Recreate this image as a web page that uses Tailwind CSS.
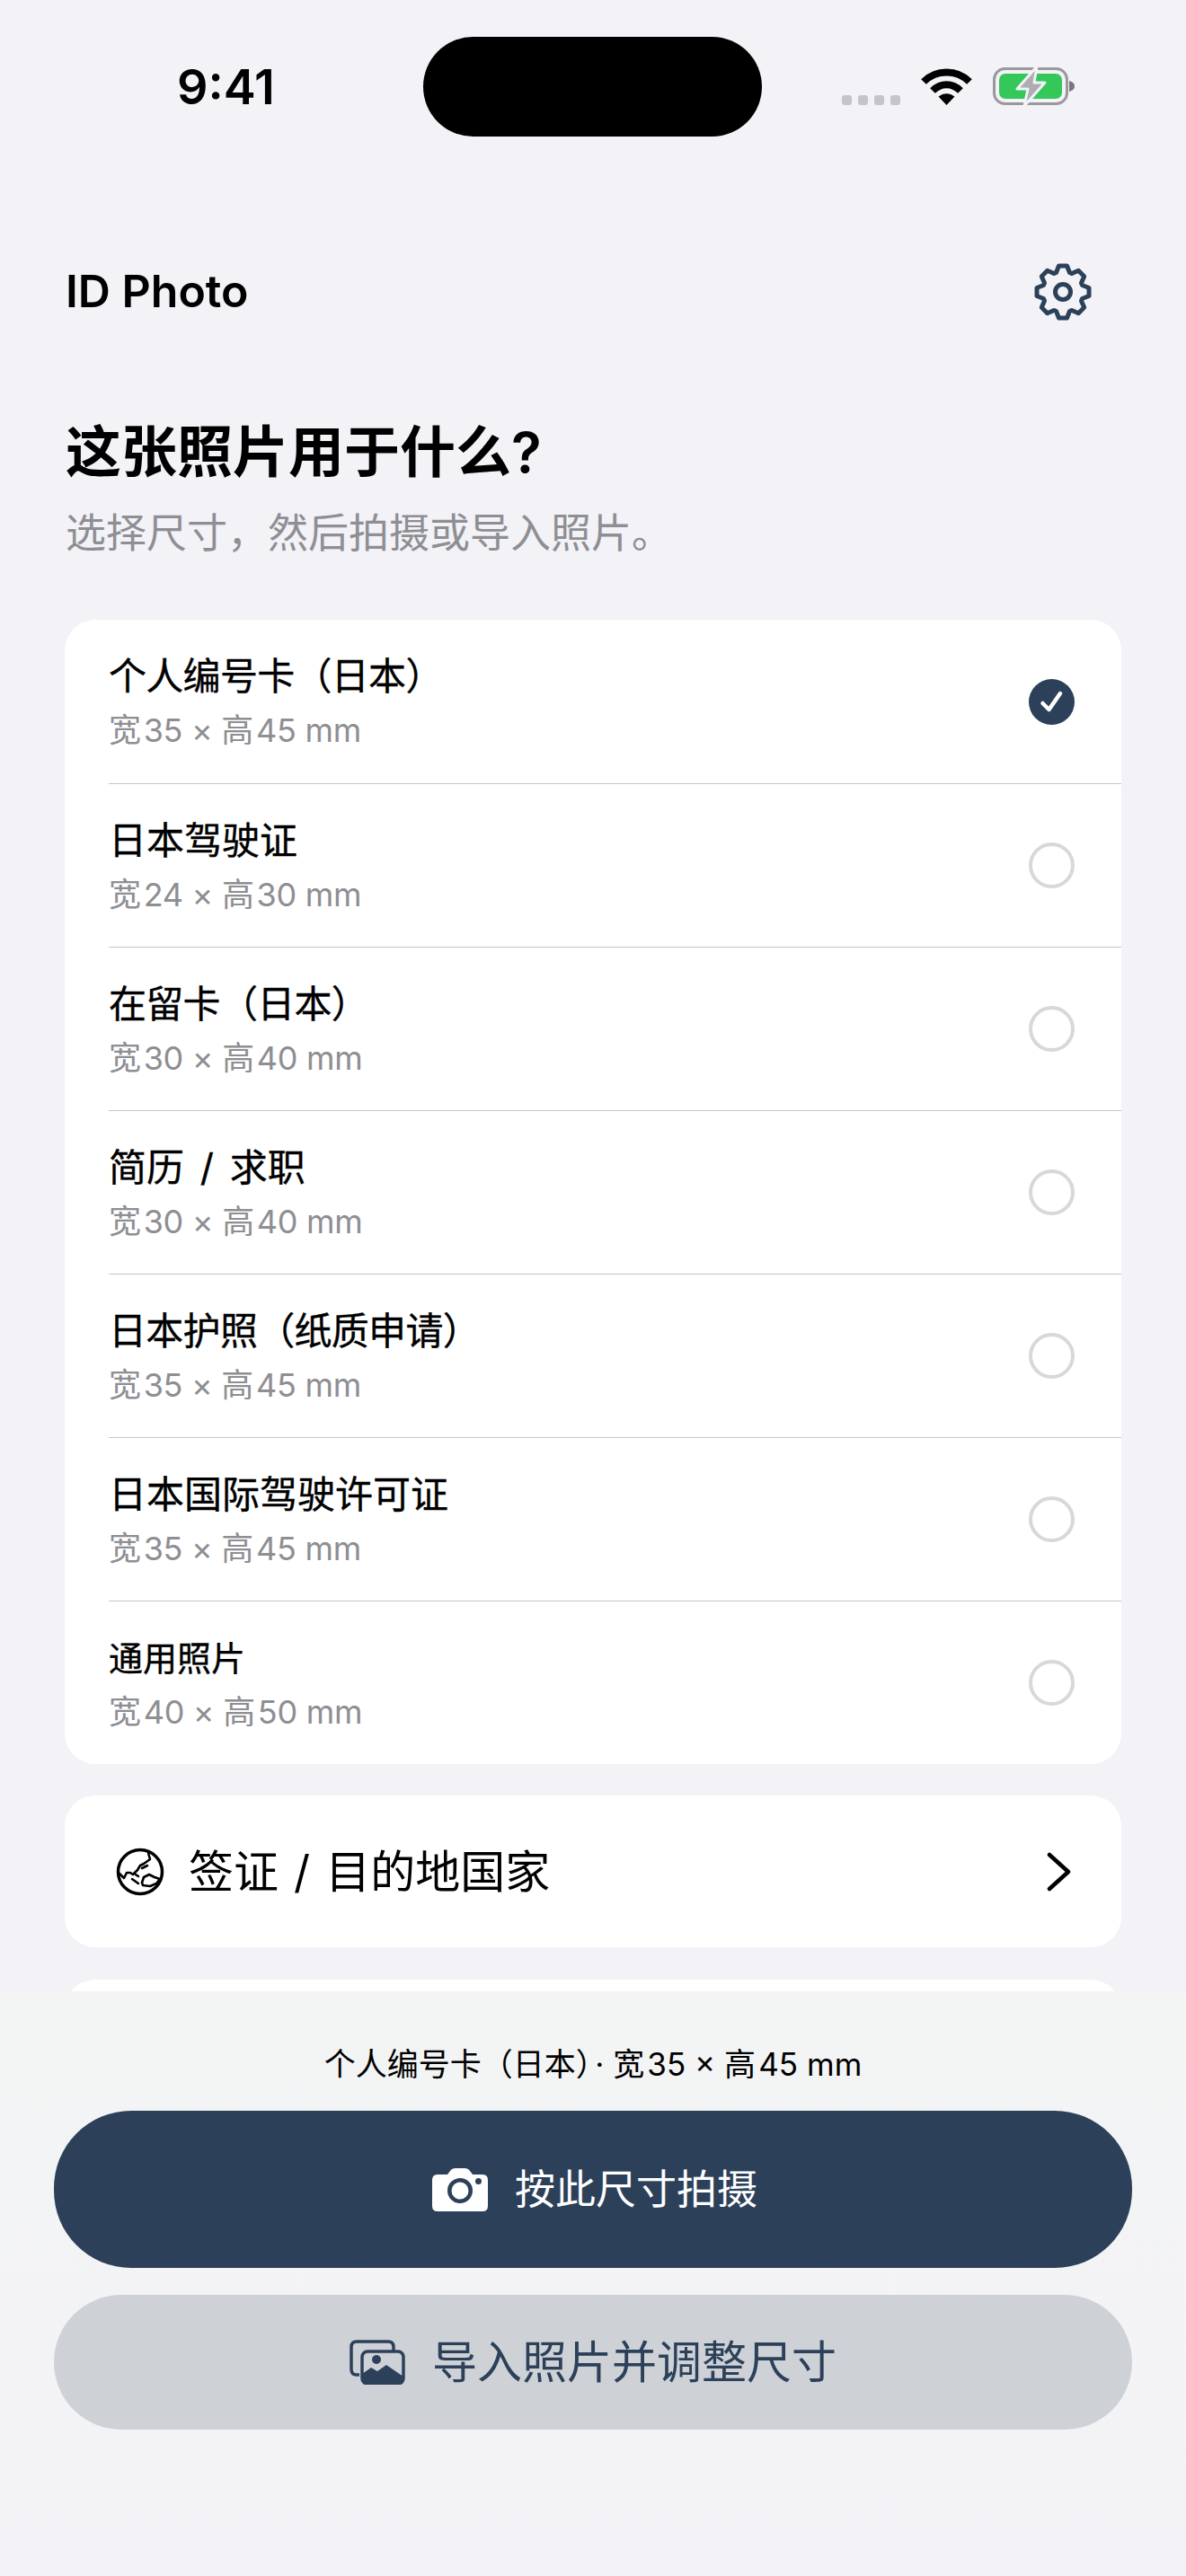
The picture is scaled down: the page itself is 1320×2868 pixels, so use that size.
<!DOCTYPE html>
<html lang="zh-CN">

<head>
    <meta charset="UTF-8">
    <meta name="viewport" content="width=device-width, initial-scale=1.0">
    <title>ID Photo</title>
    <script src="https://cdn.jsdelivr.net/npm/@tailwindcss/browser@4"></script>
</head>

<body class="bg-[#f2f2f7] text-black font-['Inter','Noto_Sans_CJK_SC',sans-serif]">
    <div class="relative w-[1320px] h-[2868px] overflow-hidden">

        <!-- Status bar -->
        <div class="grid grid-cols-[471px_377px_1fr] pt-[41px] h-[152px]">
            <div class="flex items-center justify-center pl-[32px] text-[54px] font-semibold leading-none">9:41</div>
            <div class="bg-black rounded-[56px]"></div>
            <div class="flex items-end pl-[89px] pb-[35px]">
                <div class="flex gap-[7px]">
                    <span class="w-[11px] h-[11px] rounded-[3px] bg-[#c4c4c9]"></span>
                    <span class="w-[11px] h-[11px] rounded-[3px] bg-[#c4c4c9]"></span>
                    <span class="w-[11px] h-[11px] rounded-[3px] bg-[#c4c4c9]"></span>
                    <span class="w-[11px] h-[11px] rounded-[3px] bg-[#c4c4c9]"></span>
                </div>
                <svg class="ml-[23px] w-[57px] h-[42px]" viewBox="0 0 57 42" fill="none" stroke="#000">
                    <path d="M3 16 C17 2 40 2 54 16" stroke-width="8" />
                    <path d="M13 26 C22 17 35 17 44 26" stroke-width="8" />
                    <path d="M19.5 32.5 C25 28 32 28 37.5 32.5 L28.5 42 Z" fill="#000" stroke="none" />
                </svg>
                <svg class="ml-[23px] w-[92px] h-[46px] -mb-[2px]" viewBox="0 0 92 46" fill="none">
                    <rect x="1.5" y="3.5" width="81" height="39" rx="12" stroke="#98989d" stroke-width="3" />
                    <rect x="7" y="9" width="70" height="28" rx="7" fill="#34c759" />
                    <path d="M85 17 C89 18 91 20 91 23 C91 26 89 28 85 29 Z" fill="#77777c" />
                    <path d="M49 1 L27 26 L39 26 L35 45 L58 19 L46 19 Z" fill="#adadb2" stroke="#f2f2f7" stroke-width="3" stroke-linejoin="round" />
                </svg>
            </div>
        </div>

        <!-- Header -->
        <div class="flex items-center justify-between mt-[141px] pl-[73px] pr-[105px] h-[62px]">
            <h1 class="text-[50px] font-semibold leading-none">ID Photo</h1>
            <svg class="w-[64px] h-[64px] mt-[2px]" viewBox="0 0 64 64" fill="none" stroke="#2c4159" stroke-width="5" stroke-linejoin="round">
                <path d="M24.5 10.5 L27.5 3 H36.5 L39.5 10.5 A22.8 22.8 0 0 1 41.9 11.5 L49.32 8.31 L55.69 14.68 L52.5 22.1 A22.8 22.8 0 0 1 53.5 24.5 L61 27.5 V36.5 L53.5 39.5 A22.8 22.8 0 0 1 52.5 41.9 L55.69 49.32 L49.32 55.69 L41.9 52.5 A22.8 22.8 0 0 1 39.5 53.5 L36.5 61 H27.5 L24.5 53.5 A22.8 22.8 0 0 1 22.1 52.5 L14.68 55.69 L8.31 49.32 L11.5 41.9 A22.8 22.8 0 0 1 10.5 39.5 L3 36.5 V27.5 L10.5 24.5 A22.8 22.8 0 0 1 11.5 22.1 L8.31 14.68 L14.68 8.31 L22.1 11.5 A22.8 22.8 0 0 1 24.5 10.5 Z" />
                <circle cx="32" cy="32" r="8.5" />
            </svg>
        </div>

        <!-- Title -->
        <div class="pl-[73px] mt-[109px]">
            <h2 class="text-[62px] font-semibold leading-[80px]">这张照片用于什么?</h2>
            <p class="mt-[22px] text-[45px] leading-[56px] text-[#8e8e93]">选择尺寸，然后拍摄或导入照片。</p>
        </div>

        <!-- Size list -->
        <div class="mx-[72px] mt-[68px] bg-white rounded-[34px]">
            <div class="flex items-center justify-between h-[182px] pl-[49px] pr-[52px]">
                <div>
                    <p class="text-[42px] leading-[54px] tracking-[-0.7px] [-webkit-text-stroke:0.35px_black]">个人编号卡（日本）</p>
                    <p class="mt-[10px] text-[36px] leading-[46px] tracking-[-0.3px] text-[#8e8e93]">宽&#8202;35 × 高&#8202;45 mm</p>
                </div>
                <svg class="w-[51px] h-[51px]" viewBox="0 0 51 51" fill="none">
                    <circle cx="25.5" cy="25.5" r="25.5" fill="#2c4159" />
                    <path d="M15.5 27 L22.5 34 L35 16" stroke="#fff" stroke-width="4.5" stroke-linecap="round" stroke-linejoin="round" />
                </svg>
            </div>
            <div class="ml-[49px] h-px bg-[#c6c6c8]"></div>
            <div class="flex items-center justify-between h-[181px] pl-[49px] pr-[52px]">
                <div>
                    <p class="text-[42px] leading-[54px] [-webkit-text-stroke:0.35px_black]">日本驾驶证</p>
                    <p class="mt-[10px] text-[36px] leading-[46px] tracking-[-0.3px] text-[#8e8e93]">宽&#8202;24 × 高&#8202;30 mm</p>
                </div>
                <span class="w-[51px] h-[51px] rounded-full border-4 border-[#d8d8d8]"></span>
            </div>
            <div class="ml-[49px] h-px bg-[#c6c6c8]"></div>
            <div class="flex items-center justify-between h-[181px] pl-[49px] pr-[52px]">
                <div>
                    <p class="text-[42px] leading-[54px] tracking-[-0.7px] [-webkit-text-stroke:0.35px_black]">在留卡（日本）</p>
                    <p class="mt-[10px] text-[36px] leading-[46px] tracking-[-0.3px] text-[#8e8e93]">宽&#8202;30 × 高&#8202;40 mm</p>
                </div>
                <span class="w-[51px] h-[51px] rounded-full border-4 border-[#d8d8d8]"></span>
            </div>
            <div class="ml-[49px] h-px bg-[#c6c6c8]"></div>
            <div class="flex items-center justify-between h-[181px] pl-[49px] pr-[52px]">
                <div>
                    <p class="text-[42px] leading-[54px] [word-spacing:6px] [-webkit-text-stroke:0.35px_black]">简历 / 求职</p>
                    <p class="mt-[10px] text-[36px] leading-[46px] tracking-[-0.3px] text-[#8e8e93]">宽&#8202;30 × 高&#8202;40 mm</p>
                </div>
                <span class="w-[51px] h-[51px] rounded-full border-4 border-[#d8d8d8]"></span>
            </div>
            <div class="ml-[49px] h-px bg-[#c6c6c8]"></div>
            <div class="flex items-center justify-between h-[181px] pl-[49px] pr-[52px]">
                <div>
                    <p class="text-[42px] leading-[54px] tracking-[-0.7px] [-webkit-text-stroke:0.35px_black]">日本护照（纸质申请）</p>
                    <p class="mt-[10px] text-[36px] leading-[46px] tracking-[-0.3px] text-[#8e8e93]">宽&#8202;35 × 高&#8202;45 mm</p>
                </div>
                <span class="w-[51px] h-[51px] rounded-full border-4 border-[#d8d8d8]"></span>
            </div>
            <div class="ml-[49px] h-px bg-[#c6c6c8]"></div>
            <div class="flex items-center justify-between h-[181px] pl-[49px] pr-[52px]">
                <div>
                    <p class="text-[42px] leading-[54px] [-webkit-text-stroke:0.35px_black]">日本国际驾驶许可证</p>
                    <p class="mt-[10px] text-[36px] leading-[46px] tracking-[-0.3px] text-[#8e8e93]">宽&#8202;35 × 高&#8202;45 mm</p>
                </div>
                <span class="w-[51px] h-[51px] rounded-full border-4 border-[#d8d8d8]"></span>
            </div>
            <div class="ml-[49px] h-px bg-[#c6c6c8]"></div>
            <div class="flex items-center justify-between h-[181px] pl-[49px] pr-[52px]">
                <div>
                    <p class="text-[38px] leading-[54px] [-webkit-text-stroke:0.35px_black]">通用照片</p>
                    <p class="mt-[10px] text-[36px] leading-[46px] tracking-[-0.3px] text-[#8e8e93]">宽&#8202;40 × 高&#8202;50 mm</p>
                </div>
                <span class="w-[51px] h-[51px] rounded-full border-4 border-[#d8d8d8]"></span>
            </div>
        </div>

        <!-- Visa row -->
        <div class="mx-[72px] mt-[35px] h-[169px] bg-white rounded-[34px] flex items-center justify-between pl-[56px] pr-[56px]">
            <div class="flex items-center gap-[26px]">
                <svg class="w-[56px] h-[56px]" viewBox="8 7 56 56" fill="none" stroke="#000" stroke-width="2.6" stroke-linejoin="round" stroke-linecap="round">
                    <circle cx="36" cy="35" r="24.5" stroke-width="3.5" />
                    <path d="M45 14 L47 21 L40 26 L36 28 L33 33 L28 38 L25 36 L21 36 L18 42 L13 37" />
                    <path d="M38 31 L44 28" />
                    <path d="M38 47 L40 41 L46 38 L52 41 L58 43 L54 48 L47 51 L39 50 Z" />
                    <path d="M27 43 L34 48" />
                    <path d="M31 38 L34 40" />
                </svg>
                <span class="text-[50px] leading-none [word-spacing:3px]">签证 / 目的地国家</span>
            </div>
            <svg class="w-[30px] h-[46px]" viewBox="0 0 30 46" fill="none" stroke="#000" stroke-width="4.5" stroke-linecap="round" stroke-linejoin="round">
                <path d="M6 4 L27 23 L6 42" />
            </svg>
        </div>

        <!-- Next card, mostly behind the bottom panel -->
        <div class="mx-[72px] mt-[36px] h-[169px] bg-white rounded-[34px]"></div>

        <!-- Bottom action panel -->
        <div class="absolute left-0 right-0 top-[2217px] bottom-0 bg-linear-to-b from-[#f3f4f4] to-[#f3f3f7] px-[60px]">
            <p class="mt-[58px] h-[46px] text-center text-[35px] leading-[46px]">个人编号卡（日本）<span class="ml-[4px]">·</span> 宽&#8202;35 × 高&#8202;45 mm</p>
            <button class="mt-[29px] w-full h-[175px] pl-[4px] rounded-[86px] bg-[#2c4159] text-white flex items-center justify-center gap-[30px]">
                <svg class="w-[62px] h-[48px]" viewBox="0 0 62 48">
                    <path fill="#fff" fill-rule="evenodd" d="M6 7 H17 L20 3 Q22 0 26 0 H36 Q40 0 42 3 L45 7 H56 Q62 7 62 13 V42 Q62 48 56 48 H6 Q0 48 0 42 V13 Q0 7 6 7 Z M31 11 A14 14 0 1 0 31 39 A14 14 0 1 0 31 11 Z M31 15.5 A9.5 9.5 0 1 1 31 34.5 A9.5 9.5 0 1 1 31 15.5 Z M51.5 11 A3.5 3.5 0 1 0 51.5 18 A3.5 3.5 0 1 0 51.5 11 Z" />
                </svg>
                <span class="text-[45px] leading-none">按此尺寸拍摄</span>
            </button>
            <button class="mt-[30px] w-full h-[150px] rounded-[75px] bg-[#ced2d7] text-[#2c4159] flex items-center justify-center gap-[30px]">
                <svg class="w-[62px] h-[50px]" viewBox="0 0 62 50" fill="none">
                    <path d="M11 39 H8 Q2 39 2 33 V8 Q2 2 8 2 H43 Q49 2 49 8 V12" stroke="#2c4159" stroke-width="3.5" />
                    <rect x="14" y="13" width="46" height="36" rx="6" stroke="#2c4159" stroke-width="3.5" />
                    <path d="M14 42 V38 L24 31 L31 35 L41 28 L60 41 V43 Q60 49 54 49 H20 Q14 49 14 43 Z" fill="#2c4159" />
                    <circle cx="30" cy="22" r="5" fill="#2c4159" />
                </svg>
                <span class="text-[50px] leading-none">导入照片并调整尺寸</span>
            </button>
        </div>
    </div>
</body>

</html>
